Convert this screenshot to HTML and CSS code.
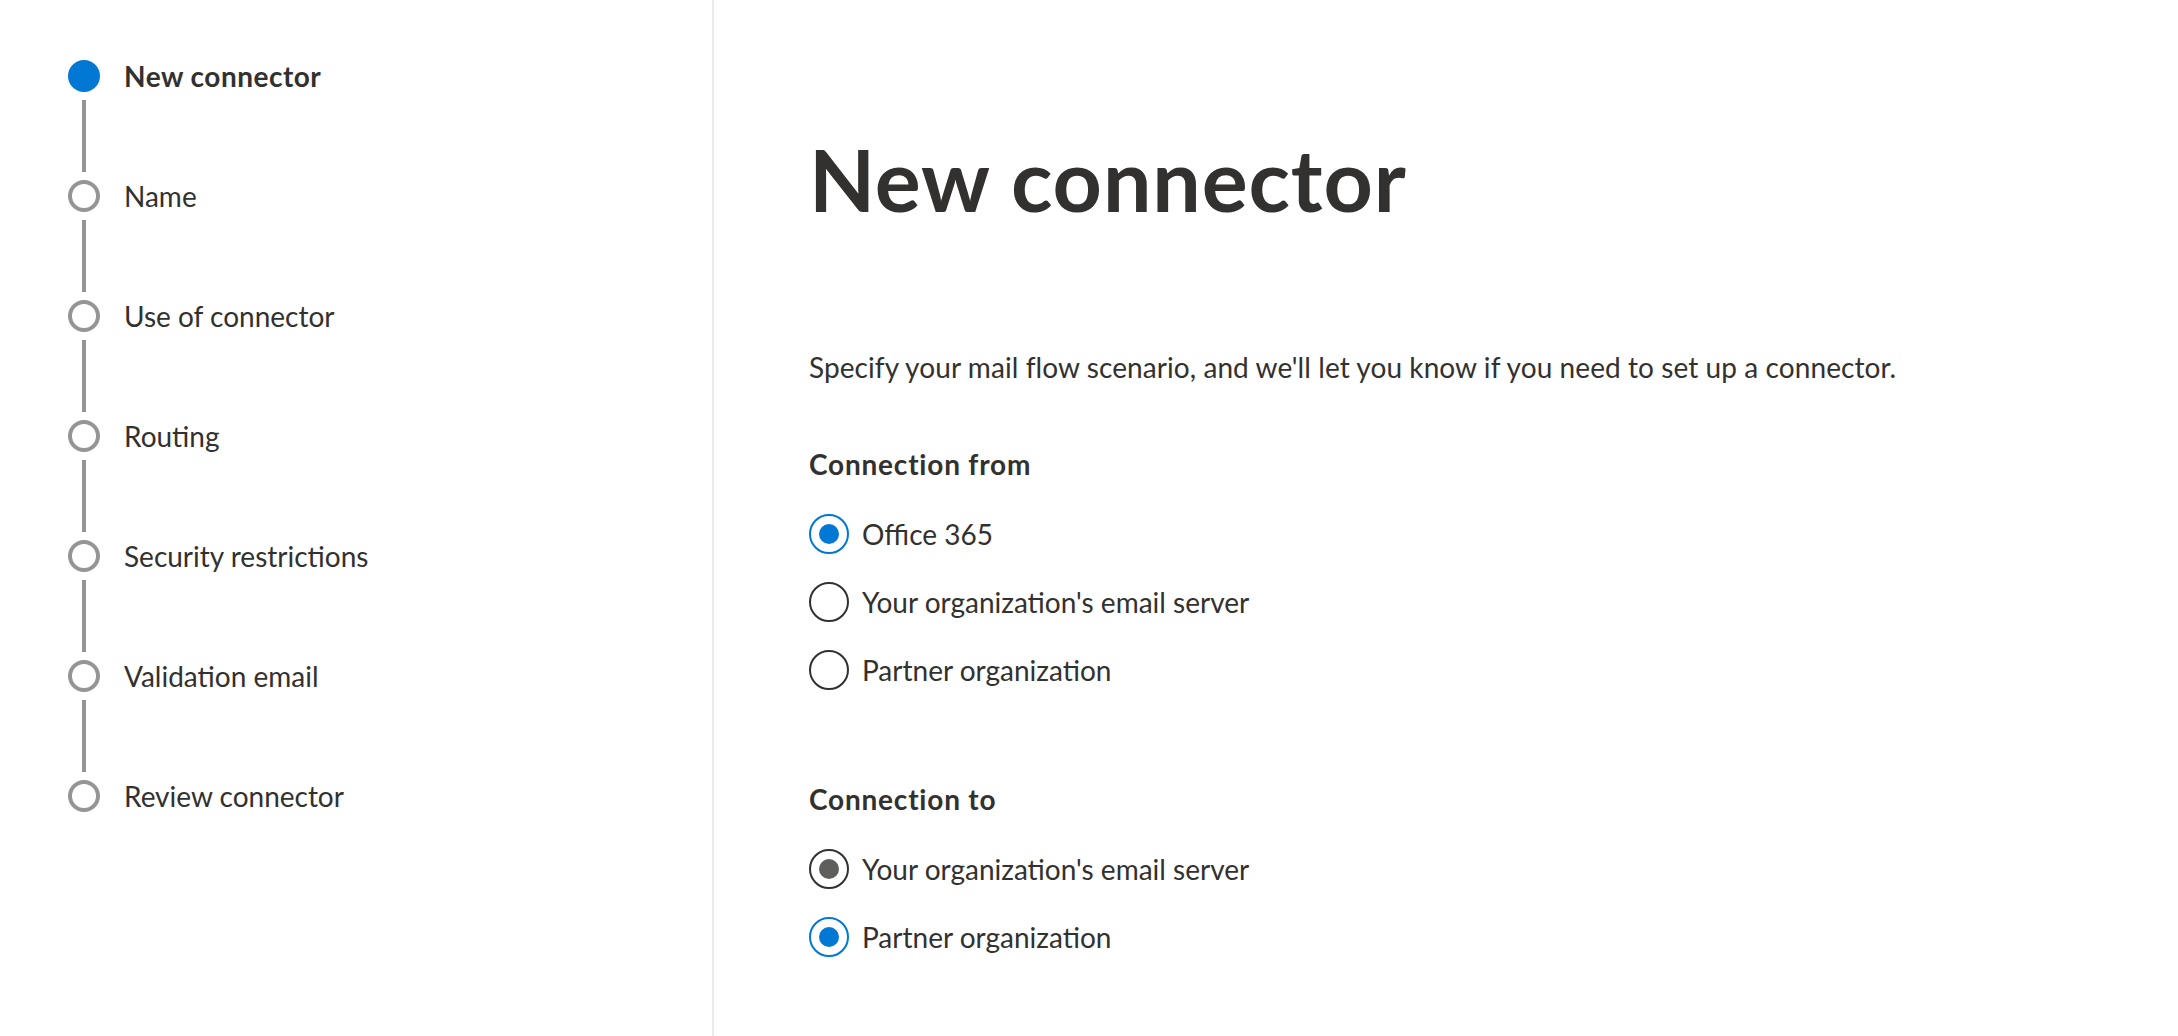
FILE: index.html
```html
<!DOCTYPE html>
<html lang="en">
<head>
<meta charset="utf-8">
<title>New connector</title>
<link rel="stylesheet" href="styles.css">
</head>
<body>
<div class="page">
  <nav class="steps">
    <div class="step current"><span class="dot"></span><span class="step-label">New connector</span></div>
    <div class="connector"></div>
    <div class="step"><span class="dot"></span><span class="step-label">Name</span></div>
    <div class="connector"></div>
    <div class="step"><span class="dot"></span><span class="step-label">Use of connector</span></div>
    <div class="connector"></div>
    <div class="step"><span class="dot"></span><span class="step-label">Routing</span></div>
    <div class="connector"></div>
    <div class="step"><span class="dot"></span><span class="step-label">Security restrictions</span></div>
    <div class="connector"></div>
    <div class="step"><span class="dot"></span><span class="step-label">Validation email</span></div>
    <div class="connector"></div>
    <div class="step"><span class="dot"></span><span class="step-label">Review connector</span></div>
  </nav>
  <main class="content">
    <h1 class="title">New connector</h1>
    <p class="intro">Specify your mail flow scenario, and we'll let you know if you need to set up a connector.</p>
    <h2 class="group-title">Connection from</h2>
    <div class="options">
      <div class="option"><span class="radio checked"></span><span class="option-label">Office 365</span></div>
      <div class="option"><span class="radio"></span><span class="option-label">Your organization's email server</span></div>
      <div class="option"><span class="radio"></span><span class="option-label">Partner organization</span></div>
    </div>
    <h2 class="group-title second">Connection to</h2>
    <div class="options">
      <div class="option"><span class="radio hover"></span><span class="option-label">Your organization's email server</span></div>
      <div class="option"><span class="radio checked"></span><span class="option-label">Partner organization</span></div>
    </div>
  </main>
</div>
</body>
</html>
```
FILE: styles.css
```css
html, body {
  margin: 0;
  padding: 0;
  background: #ffffff;
}
body {
  font-family: Lato, "Open Sans", sans-serif;
  color: #323130;
}
.page {
  display: flex;
  height: 100vh;
}
.steps {
  width: 712px;
  flex: none;
  border-right: 2px solid #edebe9;
  padding-top: 60px;
  box-sizing: content-box;
}
.step {
  display: flex;
  align-items: center;
  height: 32px;
  padding-left: 68px;
}
.dot {
  width: 32px;
  height: 32px;
  box-sizing: border-box;
  border-radius: 50%;
  border: 4px solid #979593;
  flex: none;
}
.step.current .dot {
  background: #0078d4;
  border-color: #0078d4;
}
.step-label {
  margin-left: 24px;
  font-size: 28px;
  line-height: 32px;
  white-space: nowrap;
}
.step.current .step-label {
  font-weight: 700;
  letter-spacing: 0.5px;
}
.connector {
  width: 4px;
  height: 72px;
  margin: 8px 0 8px 82px;
  background: #979593;
}
.content {
  flex: 1;
  padding-left: 95px;
  padding-top: 136px;
}
.title {
  margin: 0;
  font-size: 86px;
  line-height: 86px;
  font-weight: 700;
  letter-spacing: 0.9px;
}
.intro {
  margin: 125px 0 0;
  font-size: 28px;
  line-height: 40px;
  letter-spacing: 0.08px;
}
.group-title {
  margin: 57px 0 0;
  font-size: 28px;
  line-height: 40px;
  font-weight: 700;
  letter-spacing: 0.8px;
}
.group-title.second {
  margin-top: 89px;
}
.options {
  display: flex;
  flex-direction: column;
  gap: 28px;
  margin-top: 30px;
}
.option {
  display: flex;
  align-items: center;
  height: 40px;
}
.radio {
  width: 40px;
  height: 40px;
  box-sizing: border-box;
  border-radius: 50%;
  border: 2px solid #323130;
  flex: none;
  display: flex;
  align-items: center;
  justify-content: center;
}
.radio.checked {
  border-color: #0078d4;
}
.radio.checked::after,
.radio.hover::after {
  content: "";
  width: 20px;
  height: 20px;
  border-radius: 50%;
  background: #0078d4;
}
.radio.hover::after {
  background: #605e5c;
}
.option-label {
  margin-left: 13px;
  font-size: 28px;
  line-height: 40px;
  white-space: nowrap;
}
```
